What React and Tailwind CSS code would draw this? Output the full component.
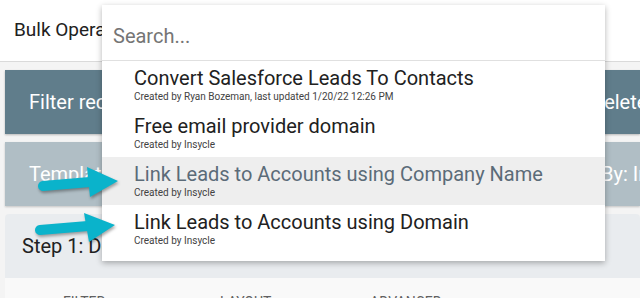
import React from 'react';

const TEMPLATES = [
  { title: 'Convert Salesforce Leads To Contacts', sub: 'Created by Ryan Bozeman, last updated 1/20/22 12:26 PM' },
  { title: 'Free email provider domain', sub: 'Created by Insycle' },
  { title: 'Link Leads to Accounts using Company Name', sub: 'Created by Insycle', active: true },
  { title: 'Link Leads to Accounts using Domain', sub: 'Created by Insycle' },
];

function Arrow({ className, shaft, head }) {
  return (
    <svg className={className} width="90" height="40" viewBox="0 0 90 40" fill="none">
      <g style={{ filter: 'drop-shadow(1px 2px 1.5px rgba(0,0,0,0.35))' }}>
        <path d={shaft} stroke="#0ab3cb" strokeWidth="10" strokeLinecap="round" />
        <path d={head} fill="#0ab3cb" />
      </g>
    </svg>
  );
}

export default function App() {
  return (
    <div className="relative w-[640px] h-[298px] overflow-hidden bg-[#f4f4f4] font-['Roboto',sans-serif]">
      {/* Header */}
      <header className="h-[62px] bg-white border-b border-[#dadada] flex items-center pl-[14px] text-[19px] text-[#212121]">
        Bulk Operations
      </header>

      {/* Operation tiles */}
      <div className="pl-[5px] pt-2 flex flex-col gap-2">
        <div className="h-[64px] bg-[#607d8b] flex items-center text-white text-[20px] shadow-[0_1px_2px_rgba(0,0,0,0.25)] whitespace-nowrap">
          <div className="w-[586px] shrink-0 pl-6">Filter records</div>
          <div className="shrink-0">Delete records</div>
        </div>
        <div className="h-[64px] bg-[#b0bec5] flex items-center text-white text-[20px] shadow-[0_1px_2px_rgba(0,0,0,0.2)] whitespace-nowrap">
          <div className="w-[596px] shrink-0 pl-6">Template: None</div>
          <div className="shrink-0">By: Insycle</div>
        </div>
        <div className="rounded-sm bg-[#e9ecef] overflow-hidden">
          <div className="h-[64px] flex items-center pl-[17px] text-[20px] text-[#212121] whitespace-nowrap">
            Step 1: Define records
          </div>
          <div className="h-[40px] bg-[#f9f9f9] flex items-start pl-[58px] pt-[14px] text-[14px] text-[#616161] uppercase whitespace-nowrap">
            <span className="w-[157px] shrink-0">Filter</span>
            <span className="w-[150px] shrink-0">Layout</span>
            <span className="shrink-0">Advanced</span>
          </div>
        </div>
      </div>

      {/* Template search dropdown */}
      <div className="absolute left-[102px] top-[5px] w-[503px] bg-white shadow-[0_2px_6px_rgba(0,0,0,0.3)] pb-2">
        <div className="h-[56px] border-b border-[#e0e0e0] flex items-center pl-[11px] pt-[7px] text-[20px] text-[#757575]">
          Search...
        </div>
        {TEMPLATES.map(t => (
          <div key={t.title} className={`h-[48px] pl-[32px] pt-[5px] whitespace-nowrap ${t.active ? 'bg-[#eeeeee]' : ''}`}>
            <div className={`text-[20px] leading-[24px] ${t.active ? 'text-[#5b6b78]' : 'text-[#212121]'}`}>{t.title}</div>
            <div className="text-[10px] leading-[14px] text-[#424242]">{t.sub}</div>
          </div>
        ))}
      </div>

      {/* Callout arrows */}
      <Arrow
        className="absolute left-[34px] top-[162px]"
        shaft="M9 24 L56 20"
        head="M53 5 L84 19 L56 35 Z"
      />
      <Arrow
        className="absolute left-[32px] top-[208px]"
        shaft="M8 22 L56 18"
        head="M52 5 L83 17 L57 34 Z"
      />
    </div>
  );
}
